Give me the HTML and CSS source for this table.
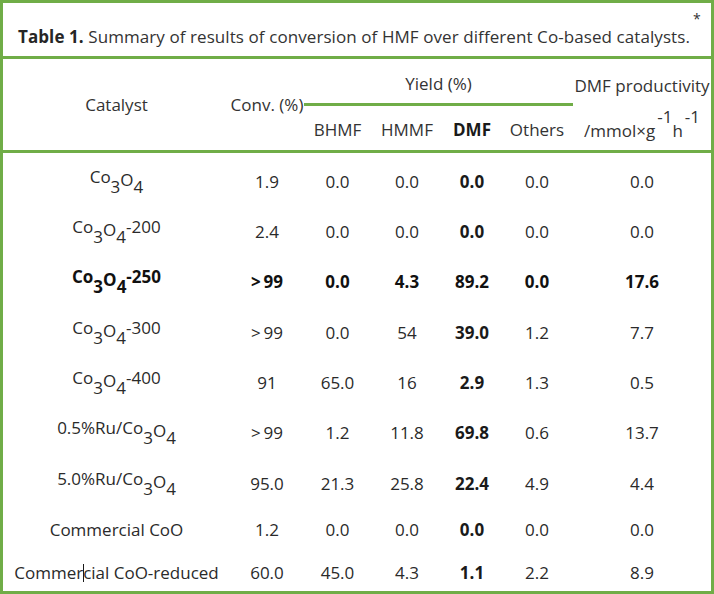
FILE: index.html
```html
<!DOCTYPE html>
<html lang="en">
<head>
<meta charset="utf-8">
<title>Table 1</title>
<link rel="stylesheet" href="styles.css">
</head>
<body>
<div class="frame">
  <div class="caption"><b>Table 1.</b> Summary of results of conversion of HMF over different Co-based catalysts.<span class="star">*</span></div>
  <table class="results">
    <colgroup>
      <col class="c-cat"><col class="c-conv"><col class="c-bhmf"><col class="c-hmmf"><col class="c-dmf"><col class="c-oth"><col class="c-prod">
    </colgroup>
    <thead>
      <tr class="h1">
        <th rowspan="2" class="span2 hb">Catalyst</th>
        <th rowspan="2" class="span2 hb">Conv. (%)</th>
        <th colspan="4" class="yield">Yield (%)</th>
        <th class="prod">DMF productivity</th>
      </tr>
      <tr class="h2">
        <th class="hb">BHMF</th>
        <th class="hb">HMMF</th>
        <th class="hb b">DMF</th>
        <th class="hb">Others</th>
        <th class="hb">/mmol×g<span class="sup">-1</span>h<span class="sup">-1</span></th>
      </tr>
    </thead>
    <tbody>
      <tr class="r50">
        <td>Co<span class="sub">3</span><span class="dn">O</span><span class="sub">4</span></td>
        <td>1.9</td><td>0.0</td><td>0.0</td><td class="b">0.0</td><td>0.0</td><td>0.0</td>
      </tr>
      <tr class="r50">
        <td>Co<span class="sub">3</span><span class="dn">O</span><span class="sub">4</span>-200</td>
        <td>2.4</td><td>0.0</td><td>0.0</td><td class="b">0.0</td><td>0.0</td><td>0.0</td>
      </tr>
      <tr class="r51 bold-row">
        <td>Co<span class="sub">3</span><span class="dn">O</span><span class="sub">4</span>-250</td>
        <td>&gt;&#8201;99</td><td>0.0</td><td>4.3</td><td>89.2</td><td>0.0</td><td>17.6</td>
      </tr>
      <tr class="r50">
        <td>Co<span class="sub">3</span><span class="dn">O</span><span class="sub">4</span>-300</td>
        <td>&gt;&#8201;99</td><td>0.0</td><td>54</td><td class="b">39.0</td><td>1.2</td><td>7.7</td>
      </tr>
      <tr class="r50">
        <td>Co<span class="sub">3</span><span class="dn">O</span><span class="sub">4</span>-400</td>
        <td>91</td><td>65.0</td><td>16</td><td class="b">2.9</td><td>1.3</td><td>0.5</td>
      </tr>
      <tr class="r51">
        <td>0.5%Ru/Co<span class="sub">3</span><span class="dn">O</span><span class="sub">4</span></td>
        <td>&gt;&#8201;99</td><td>1.2</td><td>11.8</td><td class="b">69.8</td><td>0.6</td><td>13.7</td>
      </tr>
      <tr class="r50">
        <td>5.0%Ru/Co<span class="sub">3</span><span class="dn">O</span><span class="sub">4</span></td>
        <td>95.0</td><td>21.3</td><td>25.8</td><td class="b">22.4</td><td>4.9</td><td>4.4</td>
      </tr>
      <tr class="r43">
        <td>Commercial CoO</td>
        <td>1.2</td><td>0.0</td><td>0.0</td><td class="b">0.0</td><td>0.0</td><td>0.0</td>
      </tr>
      <tr class="r43">
        <td>Commer<span class="caret"></span>cial CoO-reduced</td>
        <td>60.0</td><td>45.0</td><td>4.3</td><td class="b">1.1</td><td>2.2</td><td>8.9</td>
      </tr>
    </tbody>
  </table>
</div>
</body>
</html>
```

FILE: styles.css
```css
html, body {
  margin: 0;
  padding: 0;
  background: #ffffff;
}

body {
  font-family: "Open Sans", "Noto Sans", "DejaVu Sans", sans-serif;
  font-size: 17px;
  color: #2a2a2a;
}

.frame {
  width: 714px;
  height: 594px;
  box-sizing: border-box;
  border: 3px solid #70ad47;
  overflow: hidden;
}

.caption {
  height: 56px;
  box-sizing: border-box;
  padding: 22px 0 0 15px;
  border-bottom: 3px solid #70ad47;
  white-space: nowrap;
  letter-spacing: 0.08px;
  color: #333333;
}

.caption b {
  color: #262626;
}

.star {
  position: relative;
  top: -19px;
  font-size: 14px;
  margin-left: 3px;
}

.results {
  width: 708px;
  table-layout: fixed;
  border-collapse: separate;
  border-spacing: 0;
}

.c-cat { width: 227px; }
.c-conv { width: 74px; }
.c-bhmf { width: 67px; }
.c-hmmf { width: 72px; }
.c-dmf { width: 58px; }
.c-oth { width: 72px; }
.c-prod { width: 138px; }

th {
  font-weight: normal;
  padding: 0;
  vertical-align: middle;
  text-align: center;
  white-space: nowrap;
  color: #333333;
}

.h1 { height: 47px; }
.h2 { height: 47px; }

.h1 th { padding-top: 5px; }
.h1 th.span2 { padding-top: 0; }
.h2 th { padding-top: 3px; }

.yield {
  border-bottom: 3px solid #70ad47;
}

.hb {
  border-bottom: 3px solid #70ad47;
}

.b {
  font-weight: bold;
  color: #1a1a1a;
}

th.b {
  font-weight: bold;
}

.sup {
  line-height: 0;
  vertical-align: 14px;
  margin-left: 2px;
}

td {
  padding: 6px 0 0;
  vertical-align: middle;
  text-align: center;
  white-space: nowrap;
}

.sub {
  vertical-align: -10px;
}

.dn {
  vertical-align: -3px;
  line-height: 0;
}

.r50 { height: 50px; }
.r51 { height: 51px; }
.r43 { height: 43px; }

.bold-row td {
  font-weight: bold;
  color: #111111;
}

.caret {
  display: inline-block;
  width: 1px;
  height: 18px;
  margin-right: -1px;
  background: #1a1a1a;
  vertical-align: -3px;
}
```
